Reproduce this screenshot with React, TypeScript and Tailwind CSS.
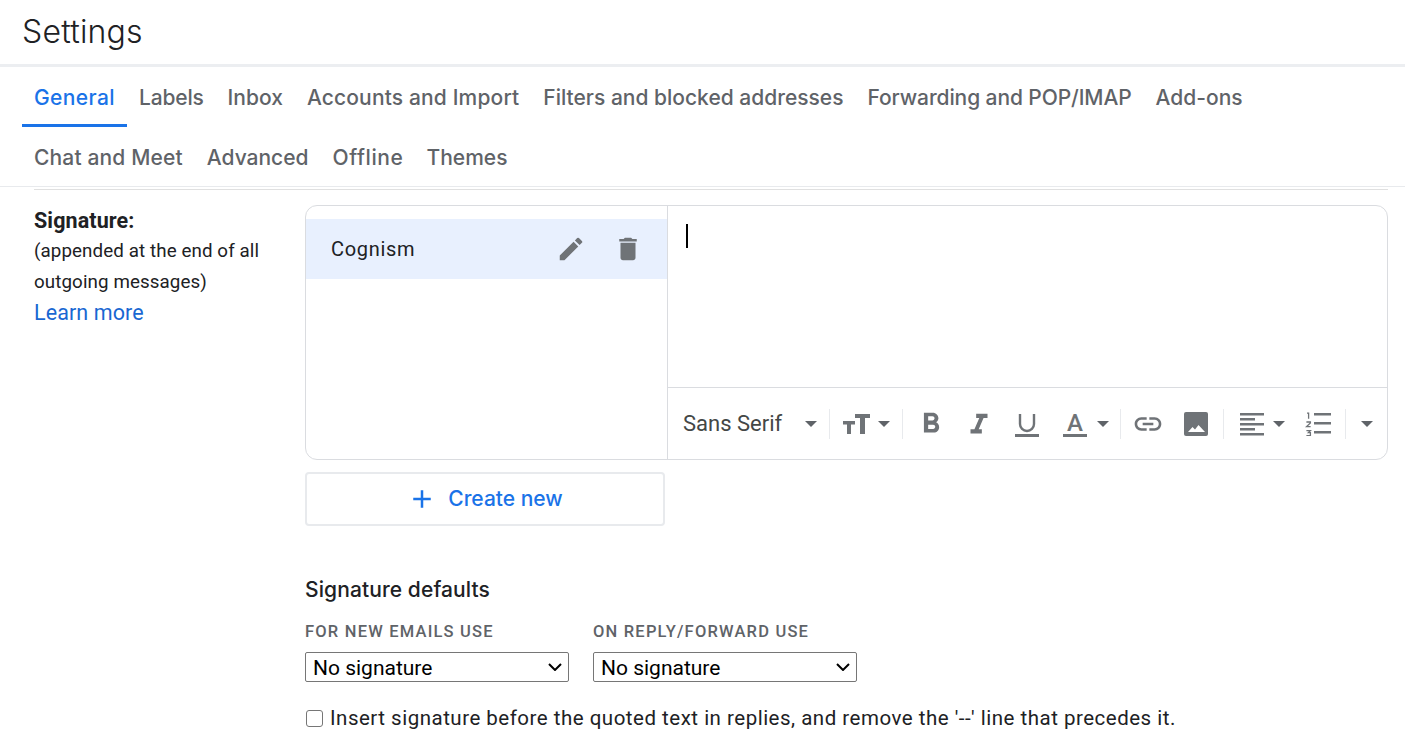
import { MdAdd, MdDelete, MdEdit, MdFormatBold, MdFormatItalic, MdLink } from "react-icons/md";

function Tab({ label, active, className }: { label: string; active?: boolean; className?: string }) {
  return (
    <div className={`flex h-[60px] items-center border-b-[3px] px-3 pt-[5px] text-[21px] font-medium ${active ? "border-[#1a73e8] text-[#1a73e8]" : "border-transparent text-[#5f6368]"} ${className ?? ""}`}>
      {label}
    </div>
  );
}

function Sep({ className }: { className?: string }) {
  return <div className={`h-[30px] w-px shrink-0 bg-[#e8eaed] ${className ?? ""}`} />;
}

function Caret({ className }: { className?: string }) {
  return (
    <svg viewBox="0 0 24 24" className={`h-[24px] w-[24px] shrink-0 fill-[#5f6368] ${className ?? ""}`}>
      <path d="M6 9h12l-6 6z" />
    </svg>
  );
}

function SizeIcon() {
  return (
    <svg viewBox="0 0 30 30" className="ml-[10px] h-[30px] w-[30px] shrink-0 fill-current">
      <path d="M15 5h15v4h-5v16h-5V9h-5zM3 12h12v3.5h-4V25H7v-9.5H3z" />
    </svg>
  );
}

function UnderlineIcon() {
  return (
    <svg viewBox="0 0 24 24" className="ml-[19px] h-[24px] w-[24px] shrink-0 translate-y-[1px]">
      <path d="M5 1v10a7 7 0 0 0 14 0V1" fill="none" stroke="currentColor" strokeWidth="2.4" />
      <rect x="0" y="21" width="24" height="3" fill="currentColor" />
    </svg>
  );
}

function ImageIcon() {
  return (
    <svg viewBox="0 0 24 24" className="ml-[20px] h-[24px] w-[24px] shrink-0">
      <rect width="24" height="24" rx="2" fill="currentColor" />
      <path d="M4 20l4.5-5 2.5 2.5 3.5-4.5 6.5 7z" fill="white" />
    </svg>
  );
}

function AlignIcon() {
  return (
    <svg viewBox="0 0 24 24" className="ml-[16px] h-[24px] w-[24px] shrink-0 fill-current">
      <path d="M0 1h24v2.4H0zM0 6h15v2.4H0zM0 11h24v2.4H0zM0 16h15v2.4H0zM0 21h24v2.4H0z" />
    </svg>
  );
}

function ListIcon() {
  return (
    <svg viewBox="0 0 30 24" className="ml-[13px] h-[24px] w-[30px] shrink-0">
      <path d="M10 2.2h17M10 11.2h17M10 20.2h17" stroke="currentColor" strokeWidth="2.4" fill="none" />
      <path d="M3 1.2h1.6v5.6M2.4 10h4v1L2.6 14.6h4M2.4 18.6h4l-2 2h2v3h-4" stroke="currentColor" strokeWidth="1.3" fill="none" />
    </svg>
  );
}

function Toolbar() {
  return (
    <div className="flex h-[71px] items-center pl-[15px] text-[#6f7377]">
      <span className="w-[116px] shrink-0 text-[22px] text-[#444746]">Sans Serif</span>
      <Caret />
      <Sep className="ml-[6px]" />
      <SizeIcon />
      <Caret className="ml-[2px]" />
      <Sep className="ml-[6px]" />
      <MdFormatBold size={34} className="ml-[11px] shrink-0" />
      <MdFormatItalic size={34} className="ml-[14px] shrink-0 translate-y-[1px]" />
      <UnderlineIcon />
      <span className="ml-[24px] flex h-[24px] w-[24px] shrink-0 translate-y-[1px] flex-col items-center">
        <span className="text-[24px] font-medium leading-[20px]">A</span>
        <span className="mt-auto h-[3px] w-[24px] bg-current" />
      </span>
      <Caret className="ml-[4px]" />
      <Sep className="ml-[5px]" />
      <MdLink size={32} className="ml-[11px] shrink-0" />
      <ImageIcon />
      <Sep className="ml-[15px]" />
      <AlignIcon />
      <Caret className="ml-[3px]" />
      <ListIcon />
      <Sep className="ml-[11px]" />
      <Caret className="ml-[9px]" />
    </div>
  );
}

function SigSelect({ label }: { label: string }) {
  return (
    <div className="w-[264px]">
      <div className="text-[16.5px] font-medium tracking-[1.2px] text-[#5f6368]">{label}</div>
      <div className="relative mt-[8px] h-[30px]">
        <select className="block h-[30px] w-full appearance-none rounded-[2px] border border-[#767676] bg-white pl-[7px] text-[21px] text-black">
          <option>No signature</option>
        </select>
        <svg viewBox="0 0 14 8" className="pointer-events-none absolute right-[7px] top-[11px] h-[8px] w-[14px]" fill="none" stroke="black" strokeWidth="2">
          <path d="M1 1l6 6 6-6" />
        </svg>
      </div>
    </div>
  );
}

export default function App() {
  return (
    <div className="h-[741px] w-[1405px] overflow-hidden bg-white font-['Roboto',sans-serif] text-[#202124]">
      <header className="box-content flex h-[64px] items-center border-b-[3px] border-[#eceef1] pl-[22px]">
        <h1 className="font-['Inter',sans-serif] text-[32px] font-light tracking-[0.2px] text-[#202124]">Settings</h1>
      </header>
      <nav className="box-content h-[119px] border-b border-[#e8eaed] pl-[22px] font-['Inter',sans-serif]">
        <div className="flex">
          <Tab label="General" active className="tracking-[0.4px]" />
          <Tab label="Labels" className="tracking-[-0.2px]" />
          <Tab label="Inbox" />
          <Tab label="Accounts and Import" className="tracking-[0.15px]" />
          <Tab label="Filters and blocked addresses" />
          <Tab label="Forwarding and POP/IMAP" className="tracking-[-0.1px]" />
          <Tab label="Add-ons" />
        </div>
        <div className="flex">
          <Tab label="Chat and Meet" className="tracking-[0.15px]" />
          <Tab label="Advanced" />
          <Tab label="Offline" className="tracking-[0.6px]" />
          <Tab label="Themes" className="-ml-[1px]" />
        </div>
      </nav>
      <div className="ml-[34px] mr-[17px] mt-[2px] border-t border-[#e0e0e0]" />
      <main className="ml-[34px] mr-[17px] mt-[15px] flex">
        <div className="w-[271px] text-[18.75px] leading-[31px] tracking-[0.1px]">
          <div className="text-[21.5px] font-bold leading-[31px]">Signature:</div>
          <div>(appended at the end of all</div>
          <div>outgoing messages)</div>
          <div className="text-[21.5px] leading-[30px] text-[#1967d2]">Learn more</div>
        </div>
        <div className="flex-1">
          <div className="flex h-[255px] rounded-[12px] border border-[#dadce0]">
            <div className="w-[362px] shrink-0 border-r border-[#dadce0] pt-[13px]">
              <div className="flex h-[60px] items-center bg-[#e8f0fe] pl-[25px] pr-[24px]">
                <span className="flex-1 text-[20px] tracking-[0.7px]">Cognism</span>
                <MdEdit size={30} className="text-[#6f7377]" />
                <MdDelete size={30} className="ml-[27px] text-[#6f7377]" />
              </div>
            </div>
            <div className="flex min-w-0 flex-1 flex-col">
              <div className="flex-1 pl-[18px] pt-[18px]">
                <div className="h-[24px] w-[2px] bg-black" />
              </div>
              <div className="border-t border-[#dadce0]"><Toolbar /></div>
            </div>
          </div>
          <button className="mt-[12px] flex h-[54px] w-[360px] items-center justify-center rounded-[4px] border-2 border-[#e8eaed] font-['Inter',sans-serif] text-[21px] font-medium text-[#1a73e8]">
            <MdAdd size={30} className="mr-[11px]" />Create new
          </button>
          <h2 className="mt-[48px] font-['Inter',sans-serif] text-[21px] font-medium tracking-[0.1px]">Signature defaults</h2>
          <div className="mt-[14px] flex gap-[24px]">
            <SigSelect label="FOR NEW EMAILS USE" />
            <SigSelect label="ON REPLY/FORWARD USE" />
          </div>
          <label className="mt-[21px] flex items-center text-[20.5px] tracking-[0.5px]">
            <input type="checkbox" className="m-0 ml-[1px] mr-[7px] size-[17px] appearance-none rounded-[3px] border border-[#767676] bg-white" />
            Insert signature before the quoted text in replies, and remove the '--' line that precedes it.
          </label>
        </div>
      </main>
    </div>
  );
}
